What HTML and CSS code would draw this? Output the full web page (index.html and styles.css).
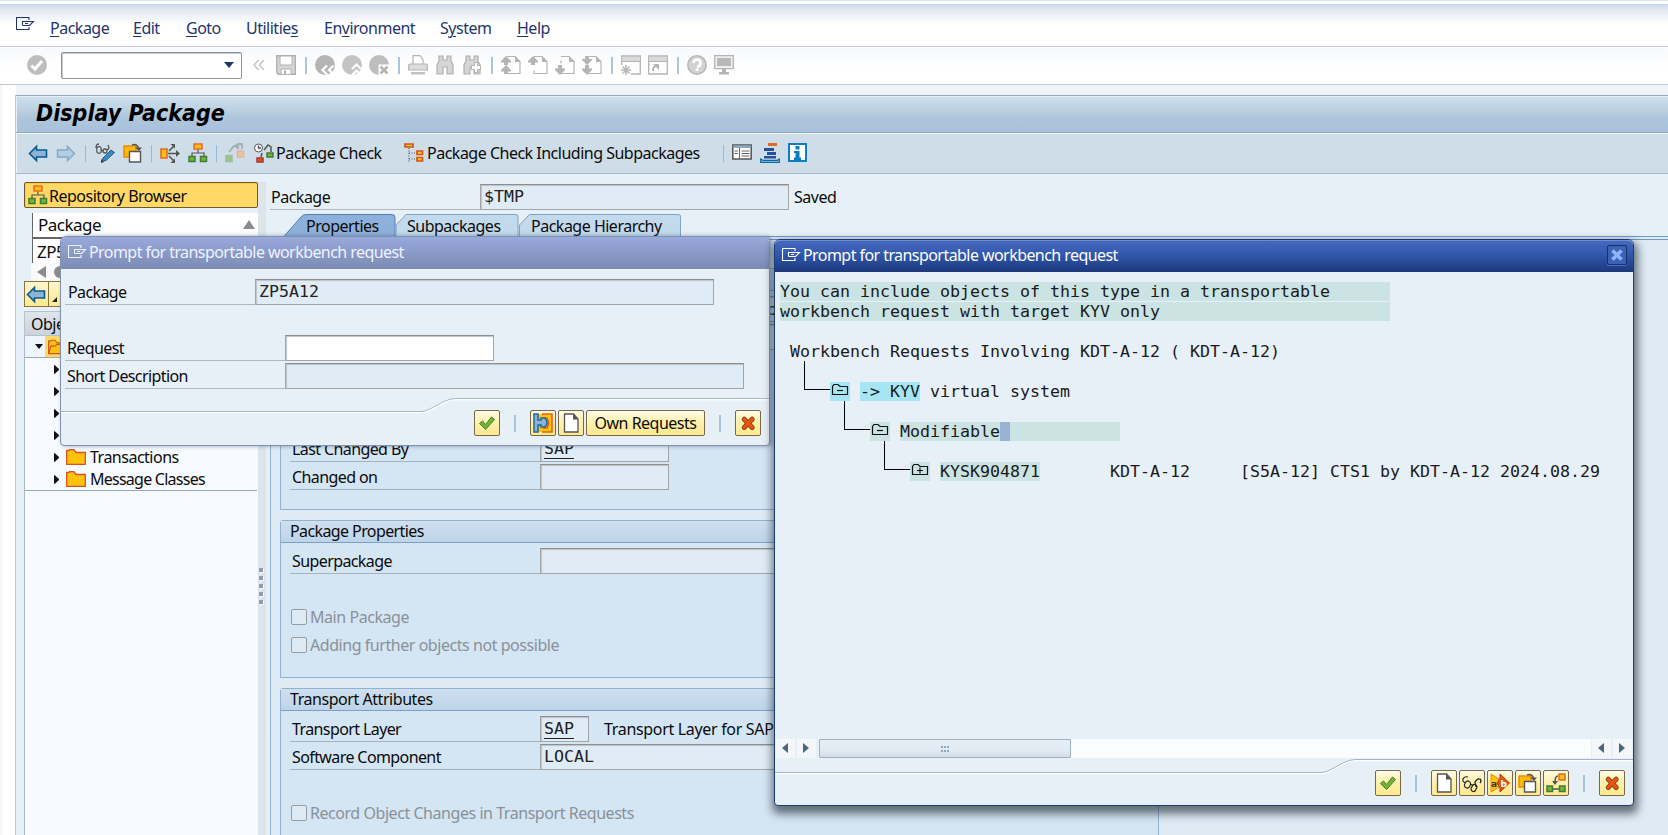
FILE: index.html
```html
<!DOCTYPE html>
<html lang="en">
<head>
<meta charset="utf-8">
<title>Display Package</title>
<link rel="stylesheet" href="styles.css">
</head>
<body>
<svg class="defs" width="0" height="0">
  <symbol id="menu" viewBox="0 0 19 14"><path d="M13 3V.5H.5v12H13V10M6.500 8.500V4.500H17.500L13.500 8.500H6.500M9 6.500h3" fill="none" stroke="currentColor" stroke-width="1.1"/></symbol>
  <symbol id="ok" viewBox="0 0 20 20"><path d="M2.500 10.500l3-2.500 3 3.500L14.500 4l3 2.500-9 10z" fill="#72b62b" stroke="#3f7d3c"/></symbol>
  <symbol id="no" viewBox="0 0 20 20"><path d="M6.200 6.200l8 8.200M14.200 6.200l-8 8.200" stroke="#8c3a1c" stroke-width="5" stroke-linecap="round"/><path d="M6.200 6.200l8 8.200M14.200 6.200l-8 8.200" stroke="#e4570f" stroke-width="3.400" stroke-linecap="round"/></symbol>
  <symbol id="new" viewBox="0 0 20 20"><path d="M3.500 1h9L17 6v13H3.500z" fill="#fff" stroke="#555" stroke-width="1.300"/><path d="M12 1l5 5.500h-5z" fill="#555"/></symbol>
  <symbol id="left" viewBox="0 0 20 20"><path d="M1.500 10.500L8.500 3.500V7h10v7h-10v3.500z" fill="#8db4d8" stroke="#0b5a8c" stroke-width="1.600"/></symbol>
  <symbol id="right" viewBox="0 0 20 20"><path d="M18.500 10.500L11.500 3.500V7h-10v7h10v3.500z" fill="#b4cee2" stroke="#7fa9c6" stroke-width="1.400"/></symbol>
  <symbol id="copy" viewBox="0 0 20 20"><path d="M1 3h12v11H1z" fill="#ffb80c" stroke="#ee8a00" stroke-width="1.500"/><path d="M6.500 8.500h11V19h-11z" fill="#fff" stroke="#555" stroke-width="1.400"/><path d="M9 2q5-2 7 4" fill="none" stroke="#555" stroke-width="1.500"/><path d="M12 4.500h7L16 8z" fill="#555"/></symbol>
  <symbol id="hier" viewBox="0 0 20 20"><path d="M10 6v4M4 13v-3h12v3" fill="none" stroke="#555" stroke-width="1.200"/><path d="M6 1h8v5H6z" fill="#ffc20e" stroke="#e8692a" stroke-width="1.500"/><path d="M1 13.500h6v5H1zM12.500 13.500h6v5h-6z" fill="#75b52b" stroke="#3b7d3e" stroke-width="1.500"/></symbol>
  <symbol id="doc" viewBox="0 0 20 20"><path d="M6 1.500h8l5 5V18.500H6v-3M6 5.500v3" fill="none" stroke="#b4b4b4" stroke-width="1.200"/><path d="M14 1l5 6h-5z" fill="#b4b4b4"/></symbol>
  <symbol id="upx" viewBox="0 0 20 20"><path d="M5 1l5 5v1.500H7V10H3V7.500H0V6z" fill="#b4b4b4"/></symbol>
  <symbol id="dnx" viewBox="0 0 20 20"><path d="M5 20l5-5v-1.500H7V10H3v3.500H0V15z" fill="#b4b4b4"/></symbol>
  <symbol id="bino" viewBox="0 0 20 20"><path d="M4 1h4v4h4V1h4v5l2 4v9h-6v-7H8v7H2v-9l2-4z" fill="#d5d5d5" stroke="#b0b0b0" stroke-width="1.200"/></symbol>
  <symbol id="win" viewBox="0 0 20 20"><path d="M.7 10V1h18.600v18H10" fill="none" stroke="#b4b4b4" stroke-width="1.300"/><path d="M1 2h18v4H1z" fill="#d9d9d9"/><path d="M1 6.500h18" stroke="#b4b4b4"/></symbol>
  <symbol id="folder" viewBox="0 0 20 16"><path d="M.7 15.300V1.500h2l1-1h4l2.500 3h9.100v11.800z" fill="#ffc20e" stroke="#d3541c" stroke-width="1.300"/></symbol>
  <symbol id="openfolder" viewBox="0 0 20 16"><path d="M.7 15.300V1.500h2l1-1h4l2.500 3h9.100v11.800z" fill="#ffc20e" stroke="#d3541c" stroke-width="1.300"/><path d="M1 15l2-8h5l2-2h9" fill="none" stroke="#d3541c" stroke-width="1.300"/></symbol>
  <symbol id="tri" viewBox="0 0 6 10"><path d="M0 0h1l5 4.500v1L1 10H0z" fill="#111"/></symbol>
  <symbol id="tl" viewBox="0 0 6 10"><path d="M6 0L0 5l6 5z" fill="#4e6478"/></symbol>
  <symbol id="tr" viewBox="0 0 6 10"><path d="M0 0l6 5-6 5z" fill="#4e6478"/></symbol>
  <symbol id="nodem" viewBox="0 0 20 19"><path d="M2.500 12.500v-8l1.500-2h4l2 2h7.500v8z" fill="none" stroke="#111" stroke-width="1.200"/><path d="M7 8.500h6" stroke="#111" stroke-width="1.200"/></symbol>
  <symbol id="nodep" viewBox="0 0 20 19"><path d="M2.500 12.500v-8l1.500-2h4l2 2h7.500v8z" fill="none" stroke="#111" stroke-width="1.200"/><path d="M7 8.500h6M10 5.500v6" stroke="#111" stroke-width="1.200"/></symbol>
</svg>

<div class="app">
  <nav class="menubar">
    <svg class="menu-ic"><use href="#menu"/></svg>
    <span><u>P</u>ackage</span><span><u>E</u>dit</span><span><u>G</u>oto</span><span>Utilitie<u>s</u></span><span>En<u>v</u>ironment</span><span>S<u>y</u>stem</span><span><u>H</u>elp</span>
  </nav>

  <div class="stdbar">
    <svg class="ic" viewBox="0 0 20 20"><circle cx="10" cy="10" r="10" fill="#bdbdbd"/><path d="M4.500 10.500l3.500 3.500L15 6" fill="none" stroke="#fff" stroke-width="3"/></svg>
    <div class="cmd"><i></i></div>
    <svg class="dbl" viewBox="0 0 12 12"><path d="M5.500 1L1 6l4.500 5M11 1L6.500 6l4.500 5" fill="none" stroke="#c6c6c6" stroke-width="1.500"/></svg>
    <svg class="ic" viewBox="0 0 20 20"><path d="M.7.700h18.600v18.600H2.500L.7 17.500z" fill="#d6d6d6" stroke="#b0b0b0" stroke-width="1.400"/><path d="M4 1h12v9H4z" fill="#fff" stroke="#b0b0b0"/><path d="M5 14h10v5.500H5z" fill="#fff" stroke="#b0b0b0"/><path d="M8 15.500h2V19H8z" fill="#b0b0b0"/></svg>
    <b class="sep"></b>
    <svg class="ic" viewBox="0 0 20 20"><circle cx="10" cy="10" r="10" fill="#b4b4b4"/><path d="M12 10.500L7.500 15l4.500 4.500M18.500 10.500L14 15l4.500 4.500" fill="none" stroke="#fff" stroke-width="2.200"/></svg>
    <svg class="ic" viewBox="0 0 20 20"><circle cx="10" cy="10" r="10" fill="#c4c4c4"/><path d="M10 14l4.500-4.500 4.500 4.500M10 20l4.500-4.500L19 20" fill="none" stroke="#fff" stroke-width="2.200"/></svg>
    <svg class="ic" viewBox="0 0 20 20"><circle cx="10" cy="10" r="10" fill="#bdbdbd"/><path d="M9.500 9.500h10.500v10.500H9.500z" fill="#fff"/><path d="M11.500 11.500l7 7M18.500 11.500l-7 7" fill="none" stroke="#b4b4b4" stroke-width="2.600"/></svg>
    <b class="sep"></b>
    <svg class="ic" viewBox="0 0 20 20"><path d="M5 9V.700h7l3 4V9" fill="#fff" stroke="#b4b4b4" stroke-width="1.200"/><path d="M.7 10l1-1h17l.6 1v5H.7z" fill="#dcdcdc" stroke="#b4b4b4" stroke-width="1.200"/><path d="M3 17h14v2.500H3z" fill="#c2c2c2"/></svg>
    <svg class="ic"><use href="#bino"/></svg>
    <svg class="ic" viewBox="0 0 20 20"><use href="#bino"/><path d="M12.500 7.500h3v3h3v4h-3v3h-3v-3h-3v-4h3z" fill="#fff" stroke="#b4b4b4" stroke-width="1.100"/></svg>
    <b class="sep"></b>
    <svg class="ic" viewBox="0 0 20 20"><use href="#doc"/><use href="#upx"/><path d="M5 10l5 5v1.500H7V19H3v-2.500H0V15z" fill="#b4b4b4"/></svg>
    <svg class="ic" viewBox="0 0 20 20"><use href="#doc"/><use href="#upx"/></svg>
    <svg class="ic" viewBox="0 0 20 20"><use href="#doc"/><use href="#dnx"/></svg>
    <svg class="ic" viewBox="0 0 20 20"><use href="#doc"/><path d="M5 10l5-5V4H7V1H3v3H0v1z" fill="#b4b4b4"/><use href="#dnx"/></svg>
    <b class="sep"></b>
    <svg class="ic" viewBox="0 0 20 20"><use href="#win"/><path d="M5 10v10M0 15h10M1.500 11.500l7 7M8.500 11.500l-7 7" stroke="#b9b9b9" stroke-width="1.600"/></svg>
    <svg class="ic" viewBox="0 0 20 20"><use href="#win"/><path d="M.7 9v10H10" fill="none" stroke="#b4b4b4" stroke-width="1.300"/><path d="M5 16q-.5-5 4-5" fill="none" stroke="#b4b4b4" stroke-width="2"/><path d="M5 9h6v6z" fill="#b4b4b4"/></svg>
    <b class="sep"></b>
    <svg class="ic" viewBox="0 0 20 20"><circle cx="10" cy="10" r="9.200" fill="#d2d2d2" stroke="#b6b6b6" stroke-width="1.500"/><path d="M6.500 8q0-3.500 3.500-3.500T13.500 8 10 12M10 13.500v2.500" fill="none" stroke="#fff" stroke-width="2.600"/></svg>
    <svg class="ic" viewBox="0 0 20 20"><path d="M.7.700h18.600v13H.7z" fill="#eee" stroke="#b4b4b4" stroke-width="1.300"/><path d="M3 3h14v8H3z" fill="#b8b8b8"/><path d="M8 14h4v3h3v2.500H5V17h3z" fill="#b4b4b4"/></svg>
  </div>

  <div class="screen">
    <h1 class="title">Display Package</h1>
    <div class="appbar">
      <svg class="ic"><use href="#left"/></svg>
      <svg class="ic"><use href="#right"/></svg>
      <b class="sep first"></b>
      <svg class="ic" viewBox="0 0 20 20"><path d="M1 5q0-4 3-4M2 7a2.300 2.300 0 1 0 4 0 2.300 2.300 0 1 0-4 0M8 8a2 2 0 1 0 4 0 2 2 0 1 0-4 0M6 7l2 1M12 7q3-1 1-5" fill="none" stroke="#555" stroke-width="1.300"/><path d="M7 19l1-4 8-8 3.500 2.500-8 7.500z" fill="#3c8bc0" stroke="#1c5c8a"/><path d="M6 20v-4l3 3z" fill="#444"/></svg>
      <svg class="ic"><use href="#copy"/></svg>
      <b class="sep"></b>
      <svg class="ic" viewBox="0 0 20 20"><path d="M1 6h6v9H1z" fill="#ffc20e" stroke="#e8692a" stroke-width="1.600"/><path d="M8 10.500h9M9 8l5-5M9 13l5 5" stroke="#555" stroke-width="1.600"/><path d="M16 7l4 3.500-4 3.500zM10.500 1H15v4.500zM10.500 20H15v-4.500z" fill="#555"/></svg>
      <svg class="ic"><use href="#hier"/></svg>
      <b class="sep"></b>
      <svg class="ic faded" viewBox="0 0 20 20"><path d="M4 9l5-6h3M10 3l3-2v4zM14 1h3v5" fill="none" stroke="#888" stroke-width="1.800"/><path d="M1 12.500h6v6H1z" fill="#75b52b" stroke="#6fa76c" stroke-width="1.500"/><path d="M12.500 8h6v6h-6z" fill="#ffb54d" stroke="#ee9a6a" stroke-width="1.500"/></svg>
      <svg class="ic chkic" viewBox="0 0 20 20"><circle cx="4.500" cy="5" r="4" fill="#fff" stroke="#555"/><path d="M4.500 2.500V5H7M10 7l4-5 3 2v5M8 10l-1 4" fill="none" stroke="#555" stroke-width="1.500"/><path d="M13 10h6v4h-6z" fill="#75b52b" stroke="#3b7d3e" stroke-width="1.500"/><path d="M3 15h6v4H3z" fill="#e4570f" stroke="#a33" stroke-width="1.500"/></svg>
      <span class="cap cap1">Package Check</span>
      <svg class="ic" viewBox="0 0 20 20"><path d="M5 5v15M5 10h7M5 16h7" stroke="#555" stroke-width="1.200" stroke-dasharray="1 1.500"/><path d="M1 1h8v3H1zM13 8h5.500v3.500H13zM13 14.500h5.500V18H13z" fill="#ffc20e" stroke="#d3541c" stroke-width="1.700"/></svg>
      <span class="cap cap2">Package Check Including Subpackages</span>
      <b class="sep"></b>
      <svg class="ic" viewBox="0 0 20 20"><path d="M.8 2h18.400v14H.8z" fill="#fff" stroke="#555" stroke-width="1.500"/><path d="M1.500 2.500h17v2.500h-17z" fill="#86a9cc"/><path d="M7.500 5v11M2.500 8H6M2.500 10.500H6M9.500 8h8M9.500 10.500h8M9.500 13h8" stroke="#666"/></svg>
      <svg class="ic" viewBox="0 0 20 20"><path d="M8 0h9v3H8z" fill="#e0692c"/><path d="M4 5h10v3H4zM7 9h9v3H7zM4 13h12v2.500H4z" fill="#24509c"/><path d="M.7 16v3.300h18.600V16l-2 1.300H3z" fill="#a8c8e0" stroke="#0b6aa0" stroke-width="1.200"/></svg>
      <svg class="ic" viewBox="0 0 20 20"><path d="M1 1h17v17H1z" fill="#fff" stroke="#0a7fc2" stroke-width="2"/><path d="M7.500 3h4v3.500h-4zM6 8h5.500v6.500H13V17H6v-2.500h1.500V10H6z" fill="#0a7fc2"/></svg>
    </div>

    <div class="body">
      <aside class="side">
        <div class="repo"><svg class="ic"><use href="#hier"/></svg><span>Repository Browser</span></div>
        <div class="combo"><span>Package</span><i></i></div>
        <div class="obj">ZP5A12</div>
        <div class="hs"><i></i><em></em></div>
        <div class="nav"><div><svg class="ic"><use href="#left"/></svg></div><div><i></i></div></div>
        <div class="thead">Object Name</div>
        <div class="tree">
          <div class="troot"><i></i><b><svg width="18" height="16"><use href="#openfolder"/></svg></b></div>
          <div class="trow"><svg class="tri"><use href="#tri"/></svg></div>
          <div class="trow"><svg class="tri"><use href="#tri"/></svg></div>
          <div class="trow"><svg class="tri"><use href="#tri"/></svg></div>
          <div class="trow"><svg class="tri"><use href="#tri"/></svg></div>
          <div class="trow"><svg class="tri"><use href="#tri"/></svg><svg class="fold"><use href="#folder"/></svg>Transactions</div>
          <div class="trow last"><svg class="tri"><use href="#tri"/></svg><svg class="fold"><use href="#folder"/></svg>Message Classes</div>
          <div class="tend"></div>
        </div>
      </aside>
      <div class="split"><i></i><i></i><i></i><i></i><i></i></div>
      <main class="main">
        <div class="pkg"><span class="lab">Package</span><div class="fld mono">$TMP</div><span class="saved">Saved</span></div>
        <div class="tabs">
          <svg viewBox="0 0 400 24"><path d="M0 23.500L18 3q2-2.500 5-2.500h86q3 0 3 3v20z" fill="#8db1da" stroke="#4f80b5"/><path d="M113 23.500V11l10-10.500h110q2 0 2 2v21z" fill="#c3d9ec" stroke="#7fa3c6"/><path d="M236.500 23.500V11L246.500 .500h149q2 0 2 2v21z" fill="#c3d9ec" stroke="#7fa3c6"/></svg>
          <span class="t1">Properties</span><span class="t2">Subpackages</span><span class="t3">Package Hierarchy</span>
        </div>
        <div class="tabbody">
          <section class="grp g1">
            <h2></h2>
            <div class="rows">
              <div class="row"><span class="lab"></span><div class="fld wide tail">p</div></div>
              <div class="row"><span class="lab"></span><div class="fld wide"></div></div>
              <div class="row"></div><div class="row"></div><div class="row"></div>
              <div class="row"><span class="lab">Last Changed By</span><div class="fld mid mono"><u>SAP</u></div></div>
              <div class="row"><span class="lab">Changed on</span><div class="fld mid"></div></div>
            </div>
          </section>
          <section class="grp g2">
            <h2>Package Properties</h2>
            <div class="rows">
              <div class="row"><span class="lab">Superpackage</span><div class="fld wide"></div></div>
              <div class="row"></div>
              <div class="row chk"><i></i>Main Package</div>
              <div class="row chk"><i></i>Adding further objects not possible</div>
            </div>
          </section>
          <section class="grp g3">
            <h2>Transport Attributes</h2>
            <div class="rows">
              <div class="row"><span class="lab">Transport Layer</span><div class="fld small mono"><u>SAP</u></div><span class="desc">Transport Layer for SAP Objects</span></div>
              <div class="row"><span class="lab">Software Component</span><div class="fld wide mono">LOCAL</div></div>
              <div class="row"></div>
              <div class="row chk"><i></i>Record Object Changes in Transport Requests</div>
            </div>
          </section>
        </div>
      </main>
    </div>
  </div>

  <div class="dlg d1">
    <div class="dt"><svg><use href="#menu"/></svg><span>Prompt for transportable workbench request</span></div>
    <div class="dbody">
      <div class="frow f1"><span>Package</span><div class="fld mono">ZP5A12</div></div>
      <div class="frow f2"><span>Request</span><div class="fld edit"></div></div>
      <div class="frow f3"><span>Short Description</span><div class="fld"></div></div>
    </div>
    <div class="foot">
      <svg class="curve" viewBox="0 0 708 16"><path d="M0 14.500h360q4 0 8-2l15-8q6-3 12-3h314" fill="none" stroke="#fff" stroke-width="1.500"/><path d="M0 13.500h360q4 0 8-2l15-8q6-3 12-3h314" fill="none" stroke="#a9b9cb"/></svg>
      <div class="btns">
        <div class="btn"><svg><use href="#ok"/></svg></div><b class="sep"></b>
        <div class="btn"><svg viewBox="0 0 20 20"><path d="M1 1h18v18H1z" fill="#ffc20e"/><path d="M9 1h10v18H9" fill="none" stroke="#e8600f" stroke-width="1.600"/><path d="M10 5h4q3 5 0 10h-4" fill="none" stroke="#e8600f" stroke-width="1.500"/><path d="M1 1h4v6h3V5h4q4 5 0 9H8v-2H5v7H1z" fill="#8db4d8" stroke="#17699e" stroke-width="1.500"/></svg></div>
        <div class="btn"><svg><use href="#new"/></svg></div>
        <div class="btn own">Own Requests</div><b class="sep"></b>
        <div class="btn"><svg><use href="#no"/></svg></div>
      </div>
    </div>
  </div>

  <div class="dlg d2">
    <div class="dt"><svg><use href="#menu"/></svg><span>Prompt for transportable workbench request</span><div class="close"><svg viewBox="0 0 20 20"><path d="M5 5l10 10M15 5l-10 10" stroke="#8fb4ff" stroke-width="4"/></svg></div></div>
    <div class="list mono">
      <div class="ln"><span class="hl full">You can include objects of this type in a transportable</span></div>
      <div class="ln"><span class="hl full">workbench request with target KYV only</span></div>
      <div class="ln"></div>
      <div class="ln"><span class="c1">Workbench Requests Involving KDT-A-12 ( KDT-A-12)</span></div>
      <div class="ln c5"><i class="elbow"></i></div>
      <div class="ln c5"><svg class="node cy"><use href="#nodem"/></svg><span class="cy">-&gt; KYV</span><span class="c1">virtual system</span></div>
      <div class="ln c9"><i class="elbow"></i></div>
      <div class="ln c9"><svg class="node hl"><use href="#nodem"/></svg><span class="hl mod">Modifiable<em></em></span></div>
      <div class="ln c13"><i class="elbow"></i></div>
      <div class="ln c13"><svg class="node hl"><use href="#nodep"/></svg><span class="hl">KYSK904871</span><span class="who">KDT-A-12</span><span class="what">[S5A-12] CTS1 by KDT-A-12 2024.08.29</span></div>
    </div>
    <div class="sbar">
      <b><svg><use href="#tl"/></svg></b><b><svg><use href="#tr"/></svg></b>
      <div class="thumb"><i></i><i></i><i></i><i></i><i></i><i></i></div>
      <div class="track"></div>
      <b><svg><use href="#tl"/></svg></b><b><svg><use href="#tr"/></svg></b>
    </div>
    <div class="foot">
      <svg class="curve" viewBox="0 0 858 16"><path d="M0 14.500h546q4 0 8-2l15-8q6-3 12-3h290" fill="none" stroke="#fff" stroke-width="1.500"/><path d="M0 13.500h546q4 0 8-2l15-8q6-3 12-3h290" fill="none" stroke="#a3b3cd"/></svg>
      <div class="btns">
        <div class="btn"><svg><use href="#ok"/></svg></div><b class="sep"></b>
        <div class="btn"><svg><use href="#new"/></svg></div>
        <div class="btn"><svg viewBox="0 0 20 20"><path d="M6 4Q2 3 1 6t3 4M3 10.500a2.800 2.800 0 1 0 5 2 2.800 2.800 0 1 0-5-2M10 14a2.500 2.500 0 1 0 4 2 2.500 2.500 0 1 0-4-2M8 12q2-1 3 1M14 14l-1-5q2-4 5-3 2 2 0 4" fill="none" stroke="#222" stroke-width="1.200"/></svg></div>
        <div class="btn"><svg viewBox="0 0 20 20"><path d="M1 1l8 5v8l-8 5z" fill="#ffc20e" stroke="#ee8a00"/><path d="M10 1l9.500 9-9.500 9v-4l-3-5 3-5z" fill="#e4570f" stroke="#b83a10"/><text x="1" y="13.500" class="ab" fill="#333">a</text><text x="10.500" y="14" class="ab" fill="#fff">b</text></svg></div>
        <div class="btn"><svg><use href="#copy"/></svg></div>
        <div class="btn"><svg viewBox="0 0 20 20"><path d="M13 1h6v6h-6z" fill="#ffc20e" stroke="#e8692a" stroke-width="1.500"/><path d="M12 3q-3 0-3 6M7 16h6" fill="none" stroke="#555" stroke-width="1.500"/><path d="M6 8h6l-3 4z" fill="#555"/><path d="M1 13h5.500v5.500H1zM13.500 13H19v5.500h-5.500z" fill="#75b52b" stroke="#3b7d3e" stroke-width="1.500"/></svg></div>
        <b class="sep"></b>
        <div class="btn"><svg><use href="#no"/></svg></div>
      </div>
    </div>
  </div>
</div>
</body>
</html>
```
FILE: styles.css
```css
* { box-sizing: border-box; }
body { margin: 0; }
.defs { position: absolute; }
.app { position: relative; width: 1668px; height: 835px; overflow: hidden; display: flex; flex-direction: column;
  background: linear-gradient(90deg, #f2f3f5 0, #fff 4px); color: #0b0b0b;
  font: 16px/20px "Noto Sans", "DejaVu Sans", sans-serif; letter-spacing: -.5px; white-space: nowrap; }
.mono { font: 16.61px/20px "DejaVu Sans Mono", "Liberation Mono", monospace; letter-spacing: 0; font-weight: 200; color: #222; }
svg { display: block; flex: none; overflow: visible; }
.ic { width: 20px; height: 20px; }

.menubar { flex: none; height: 47px; display: flex; align-items: flex-start; padding: 0 0 0 16px; color: #1f356b;
  border-bottom: 1px solid #c9cfd8;
  background: linear-gradient(#d8e2f0 0 1px, #fff 1px 4px, #c9d6e9 4px, #e3e9f3 10px, #fff 25px); }
.menubar span { padding-top: 18px; }
.menubar span:nth-of-type(1) { width: 83px; }
.menubar span:nth-of-type(2) { width: 53px; }
.menubar span:nth-of-type(3) { width: 60px; }
.menubar span:nth-of-type(4) { width: 78px; }
.menubar span:nth-of-type(5) { width: 116px; }
.menubar span:nth-of-type(6) { width: 77px; }
.menubar u { text-underline-offset: 2px; text-decoration-thickness: 1px; }
.menu-ic { width: 19px; height: 14px; margin: 17px 15px 0 0; }

.stdbar { flex: none; height: 38px; display: flex; align-items: center; gap: 7px; padding: 0 0 1px 27px;
  border-bottom: 1px solid #c2c8d2; background: linear-gradient(#f7f9fc, #fff 60%); }
.cmd { width: 181px; height: 27px; margin: 0 4px 0 7px; background: #fff; border: 1px solid #8f9499; border-radius: 2px; box-shadow: inset 1px 1px 0 #c9c9c9; display: flex; justify-content: flex-end; padding: 9px 7px 0 0; }
.cmd i { border: 5px solid transparent; border-top: 6px solid #1f356b; height: 0; }
.dbl { width: 12px; height: 12px; margin-right: 4px; }
.sep { flex: none; width: 5px; height: 17px; background: linear-gradient(#a9c4e0, #a9c4e0) 2px 0 / 2px 100% no-repeat; }

.screen { flex: 1; margin: 10px 0 0 15px; border-left: 1px solid #b9c6d3; display: flex; flex-direction: column; background: #e8f0f7; min-height: 0; box-shadow: 1px -10px 0 #f0f4fa; }
.title { flex: none; margin: 0; height: 37px; padding: 1px 0 0 20px; border-top: 1px solid #94a9bd; box-shadow: inset 1px 1px 0 #e6eff7;
  background: linear-gradient(#cfe0ed, #bed2e2 35%, #aec5dc 60%, #a9c2dc); font: italic bold 23px/32px "DejaVu Sans Condensed", "Noto Sans", sans-serif; letter-spacing: 0; color: #000; }
.appbar { flex: none; height: 42px; display: flex; align-items: center; gap: 8px; padding-left: 12px; background: #cfdde8; border-top: 1px solid #93a9c0; border-bottom: 1px solid #a8bacb; box-shadow: inset 1px 1px 0 #eef4f9; }
.appbar .sep { width: 1px; background: #94b9da; }
.appbar .first { margin: 0 1px; }
.appbar .faded { opacity: .55; }
.chkic { margin-left: 1px; }
.cap1 { margin-left: -6px; width: 120px; }
.cap2 { margin-left: -5px; width: 288px; }

.body { flex: 1; display: flex; min-height: 0; padding: 8px 0 0 8px; }
.side { width: 234px; display: flex; flex-direction: column; }
.repo { flex: none; height: 26px; display: flex; align-items: center; gap: 1px; padding-left: 3px; border: 1px solid #6b5a2c; border-radius: 2px; background: #ffd866; box-shadow: inset 1px 1px 0 #ffc83c; }
.repo span { padding-top: 1px; }
.combo { flex: none; height: 24px; margin: 5px 0 0 8px; background: #fff; border-left: 1px solid #666; padding: 0 3px 1px 5px; display: flex; justify-content: space-between; align-items: center; font-size: 17px; }
.combo i { border: 6px solid transparent; border-bottom: 9px solid #8c8c8c; border-top: 0; }
.obj { flex: none; height: 26px; margin-left: 8px; padding: 3px 0 0 4px; background: #fff; border: solid #666; border-width: 2px 0 0 1px; font-size: 17px; }
.hs { flex: none; height: 18px; margin-left: 7px; background: #fafafa; display: flex; align-items: center; gap: 8px; padding-left: 0; }
.hs i { border: 6px solid transparent; border-right: 9px solid #8c8c8c; border-left: 0; margin-left: 6px; }
.hs em { width: 40px; height: 12px; border-radius: 6px; background: #8c8c8c; }
.nav { flex: none; height: 26px; display: flex; }
.nav div { width: 25px; border: 1px solid #857642; background: linear-gradient(#fff6cf, #ffe98e); padding: 2px 0 0 1px; }
.nav div + div { width: 24px; border-left: 0; }
.nav i { display: block; width: 0; margin: 13px 0 0 2px; border-left: 5px solid transparent; border-bottom: 5px solid #222; }
.thead { flex: none; height: 25px; margin-top: 4px; padding: 2px 0 0 6px; border: 1px solid #b5c3d0; background: linear-gradient(#dfe5ea, #ccd4dc); }
.tree { flex: 1; background: #f7faff; border-left: 1px solid #a9bacb; }
.troot { height: 22px; border-bottom: 1px solid #94a9c4; background: #eef5fc; display: flex; align-items: center; padding-left: 10px; gap: 2px; }
.troot i { border: 4.500px solid transparent; border-top: 5px solid #111; border-bottom: 0; }
.troot b { background: #ffd866; padding: 3px; height: 21px; }
.trow { height: 22px; display: flex; align-items: center; padding-left: 29px; }
.last { letter-spacing: -.75px; }
.tri { width: 5px; height: 9px; margin-right: 7px; }
.fold { width: 20px; height: 16px; margin-right: 4px; }
.tend { height: 1px; margin-right: 1px; background: #94a9c4; }
.split { width: 8px; background: #dbe5ea; padding: 386px 0 0 1px; display: flex; flex-direction: column; gap: 4px; }
.split i { width: 4px; height: 4px; background: #8e9db2; box-shadow: 1px 1px 0 #fff; flex: none; }
.main { flex: 1; margin-left: 4px; display: flex; flex-direction: column; min-width: 0; }
.pkg { height: 32px; display: flex; padding-top: 2px; }
.pkg .lab { width: 210px; height: 26px; padding: 3px 0 0 1px; border-bottom: 1px solid #b3b7ba; }
.fld { height: 26px; border: 1px solid #a5a5a5; border-top-color: #8d8d8d; background: #dfecf5; box-shadow: inset 1px 1px 1px #bcc4c9; padding: 2px 0 0 3px; overflow: hidden; }
.fld u { text-underline-offset: 4px; text-decoration-thickness: 1px; }
.pkg .fld { width: 309px; }
.saved { padding: 3px 0 0 5px; }
.tabs { position: relative; height: 22px; padding: 2px 0 0 36px; display: flex; }
.tabs svg { position: absolute; left: 13px; top: 0; width: 400px; height: 24px; }
.tabs span { position: relative; }
.t1 { width: 101px; } .t2 { width: 124px; }
.tabbody { flex: 1; background: #deebf5; border-top: 4px double #6f9bc8; border-left: 1px solid #8fb1d3; padding: 28px 0 0 9px; overflow: hidden; position: relative; }
.grp { width: 879px; margin-bottom: 10px; border: 1px solid #8fb1d3; border-radius: 3px 0 0 0; background: #d4e5f3; }
.g1 { height: 242px; } .g2 { height: 158px; } .g3 { height: 200px; }
.grp h2 { margin: 0; height: 22px; padding: 0 0 0 9px; font-size: 16px; font-weight: normal; letter-spacing: -.6px; line-height: 21px; border-bottom: 1px solid #7f9fc6; background: linear-gradient(#cfe0ee, #bdd4e9); }
.g3 h2 { letter-spacing: -.45px; }
.rows { padding: 5px 0 0 9px; display: flex; flex-direction: column; gap: 2px; }
.row { height: 26px; display: flex; }
.row .lab { width: 250px; padding: 3px 0 0 2px; border-bottom: 1px solid #a9b2b9; letter-spacing: -.6px; }
.wide { width: 400px; } .tail { padding-left: 226px; } .mid { width: 129px; } .small { width: 49px; }
.desc { padding: 3px 0 0 15px; letter-spacing: -.32px; }
.chk { color: #8b9199; align-items: center; gap: 3px; padding: 0 0 1px 1px; letter-spacing: -.45px; }
.chk i { width: 16px; height: 16px; border: 1px solid #979ca1; border-radius: 2px; background: #dfebf4; }

.dlg { position: absolute; display: flex; flex-direction: column; background: #e8f0f7; border-radius: 6px 6px 4px 4px; }
.dt { flex: none; height: 32px; display: flex; align-items: center; color: #fff; border-radius: 5px 5px 0 0; padding: 0 6px 2px 7px; letter-spacing: -.56px; }
.dt > svg { width: 19px; height: 14px; margin-right: 2px; }
.d1 { left: 60px; top: 236px; width: 710px; height: 210px; border: 1px solid #8291ad; box-shadow: 2px 0 4px rgba(60,80,110,.5); }
.d1 .dt { background: linear-gradient(#98a9dc, #7b8bb2); color: #eef2ff; }
.d2 { left: 774px; top: 239px; width: 860px; height: 567px; border: 1px solid #1d3b7c; box-shadow: 1px 5px 9px 3px rgba(40,50,60,.65); }
.d2 .dt { background: linear-gradient(#4569c0, #2f55a8 50%, #1b387c); border-top: 1px solid #6e8cd0; padding-bottom: 4px; }
.close { width: 20px; height: 20px; margin-left: auto; border: 1px solid #16306c; border-radius: 2px; background: #3d62b4; box-shadow: 0 1px 0 #4c70c4; }
.close svg { width: 18px; height: 18px; }
.dbody { flex: 1; }
.frow { display: flex; height: 26px; margin-left: 4px; }
.frow span { padding: 3px 0 0 2px; border-bottom: 1px solid #b3b7ba; }
.f1 { margin-top: 10px; } .f1 span { width: 190px; padding-left: 3px; } .f1 .fld { width: 459px; }
.f2 { margin-top: 30px; } .f2 span { width: 220px; } .f2 .edit { width: 209px; background: #fff; }
.f3 { margin-top: 2px; } .f3 span { width: 220px; } .f3 .fld { width: 459px; }
.frow span { letter-spacing: -.6px; }
.foot { position: relative; flex: none; height: 47px; }
.curve { position: absolute; left: 0; top: 0; width: 100%; height: 16px; overflow: hidden; }
.btns { position: relative; display: flex; justify-content: flex-end; align-items: center; gap: 2px; padding: 11px 8px 0 0; }
.d1 .btns { padding-top: 12px; }
.btns .sep { margin: 0 11px 0 10px; width: 5px; }
.btn { flex: none; width: 26px; height: 26px; border: 1px solid #76694a; border-radius: 2px; background: linear-gradient(#fffbe4, #fff0a8 50%, #ffe98e); padding: 2px; }
.btn svg { width: 20px; height: 20px; }
.own { width: 119px; text-align: center; letter-spacing: -.5px; }
.ab { font: bold 9px "DejaVu Sans", sans-serif; letter-spacing: 0; }

.list { flex: none; height: 467px; padding: 10px 0 0 5px; color: #1a1a1a; }
.ln { display: flex; height: 20px; }
.ln > span, .node { height: 19px; }
.hl { background: #cbe3e3; } .cy { background: #a5e5f4; }
.full { width: 610px; } .c1 { margin-left: 10px; }
.c5 { padding-left: 50px; } .c9 { padding-left: 90px; } .c13 { padding-left: 130px; }
.node { width: 20px; margin-right: 10px; }
.elbow { width: 26px; height: 29px; margin: -1px 0 0 -26px; border: solid #000; border-width: 0 0 1px 1px; }
.mod { width: 220px; display: flex; } .mod em { width: 10px; background: #98b2d1; }
.who { margin-left: 70px; } .what { margin-left: 50px; }
.sbar { flex: none; height: 19px; display: flex; padding: 0 1px; margin-bottom: 1px; }
.sbar b { width: 19px; margin-right: 2px; background: #f3f7fb; padding: 4px 0 0 6px; }
.sbar b:last-child { margin-right: 0; }
.sbar svg { width: 6px; height: 10px; }
.thumb { width: 252px; margin-left: 1px; border: 1px solid #9fb0bf; border-radius: 1px; background: linear-gradient(#e6eef5, #e2ebf3 60%, #cfdde8); display: grid; grid-template-columns: repeat(3, 2px); gap: 2px 1px; place-content: center; }
.thumb i { width: 2px; height: 2px; background: #93a7ba; }
.track { flex: 1; background: #fbfcfd; margin-right: 1px; }
```
